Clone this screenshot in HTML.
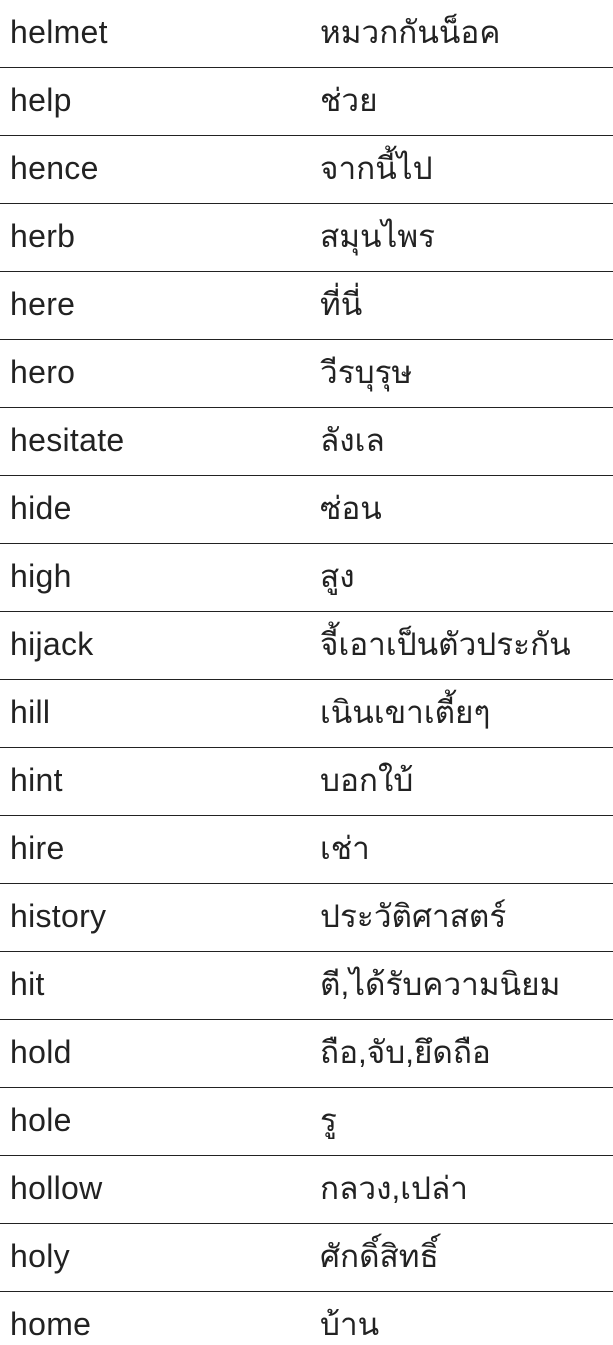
<!DOCTYPE html>
<html><head><meta charset="utf-8"><style>
html,body{margin:0;padding:0;background:#fff;width:613px;height:1345px;overflow:hidden}
.r{position:relative;height:67px;border-bottom:1px solid #222;font-family:"Liberation Sans","DejaVu Sans",sans-serif;font-size:32px;color:#222}
.r span{position:absolute;top:13px;line-height:38px}
.a{left:10px;letter-spacing:0.3px}.b{left:320px;font-size:31.5px}
</style></head><body>
<div class="r"><span class="a">helmet</span><span class="b">หมวกกันน็อค</span></div>
<div class="r"><span class="a">help</span><span class="b">ช่วย</span></div>
<div class="r"><span class="a">hence</span><span class="b">จากนี้ไป</span></div>
<div class="r"><span class="a">herb</span><span class="b">สมุนไพร</span></div>
<div class="r"><span class="a">here</span><span class="b">ที่นี่</span></div>
<div class="r"><span class="a">hero</span><span class="b">วีรบุรุษ</span></div>
<div class="r"><span class="a">hesitate</span><span class="b">ลังเล</span></div>
<div class="r"><span class="a">hide</span><span class="b">ซ่อน</span></div>
<div class="r"><span class="a">high</span><span class="b">สูง</span></div>
<div class="r"><span class="a">hijack</span><span class="b">จี้เอาเป็นตัวประกัน</span></div>
<div class="r"><span class="a">hill</span><span class="b">เนินเขาเตี้ยๆ</span></div>
<div class="r"><span class="a">hint</span><span class="b">บอกใบ้</span></div>
<div class="r"><span class="a">hire</span><span class="b">เช่า</span></div>
<div class="r"><span class="a">history</span><span class="b">ประวัติศาสตร์</span></div>
<div class="r"><span class="a">hit</span><span class="b">ตี,ได้รับความนิยม</span></div>
<div class="r"><span class="a">hold</span><span class="b">ถือ,จับ,ยึดถือ</span></div>
<div class="r"><span class="a">hole</span><span class="b">รู</span></div>
<div class="r"><span class="a">hollow</span><span class="b">กลวง,เปล่า</span></div>
<div class="r"><span class="a">holy</span><span class="b">ศักดิ์สิทธิ์</span></div>
<div class="r" style="border-bottom:none"><span class="a">home</span><span class="b">บ้าน</span></div>
</body></html>
